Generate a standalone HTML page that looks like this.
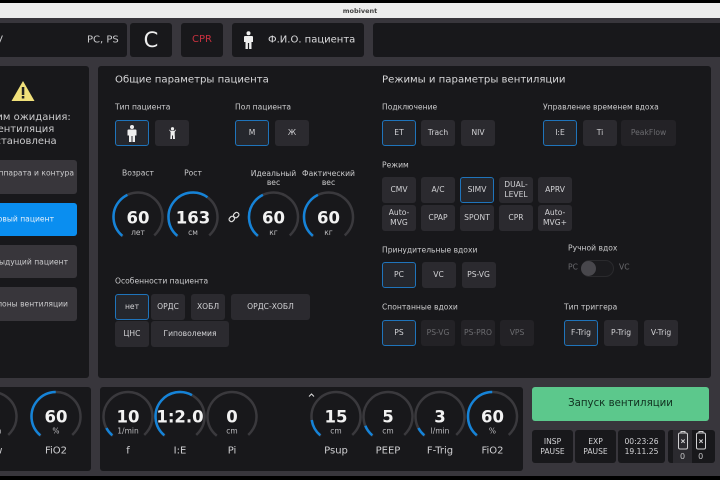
<!DOCTYPE html>
<html lang="ru"><head><meta charset="utf-8"><title>mobivent</title>
<style>
html{background:#000}
html,body{margin:0;padding:0;width:720px;height:480px;overflow:hidden}
body{position:relative;font-family:"DejaVu Sans","Liberation Sans",sans-serif;color:#d4d4d6;background:#000;filter:blur(.35px)}
#bg{position:absolute;left:0;top:3px;width:720px;height:473px;background:#38363c}
#tb{position:absolute;left:0;top:3px;width:720px;height:15px;background:#ededed;color:#444;font-size:6.5px;font-weight:bold;text-align:center;line-height:16px}
.p{position:absolute;background:#18181b;border-radius:3px}
.b{position:absolute;display:flex;align-items:center;justify-content:center;text-align:center;box-sizing:border-box;border-radius:3px;background:#2b2a2f;font-size:7.6px;line-height:10px;color:#d2d2d5;height:26px;width:34px}
.s{background:#25272d;border:1px solid #1f74bb}
.d{background:#232226;color:#6c6c70}
.t{position:absolute;white-space:nowrap;transform:translateY(-50%);font-size:7.6px;color:#cbcbcd}
.c{transform:translate(-50%,-50%);text-align:center;line-height:9px}
.h{font-size:10.15px;color:#d8d8da}
.g{position:absolute;left:0;top:0}
svg text{font-family:"DejaVu Sans","Liberation Sans",sans-serif;text-anchor:middle}
.v{font-size:16.5px;font-weight:bold;fill:#f2f2f2}
.u{font-size:7.5px;fill:#bdbdc0}
.l{font-size:10px;fill:#cfcfd2}
.tr{fill:none;stroke:#3a393d;stroke-width:2.5;stroke-dasharray:280 80}
.bl{fill:none;stroke:#1583d8;stroke-width:2.5}
</style></head><body>
<div id="bg"></div>
<div id="tb">mobivent</div>

<div class="p" style="left:-5px;top:23px;width:132px;height:34px"></div>
<div class="p" style="left:130px;top:23px;width:42px;height:34px"></div>
<div class="p" style="left:181px;top:23px;width:42px;height:34px"></div>
<div class="p" style="left:232px;top:23px;width:132px;height:34px"></div>
<div class="p" style="left:373px;top:23px;width:352px;height:34px"></div>
<div class="t" style="right:717px;top:40px;font-size:10px">SIMV</div>
<div class="t" style="left:87px;top:40px;font-size:10px">PC, PS</div>
<div class="t c" style="left:151px;top:40px;font-size:21px;line-height:24px;color:#eee">C</div>
<div class="t c" style="left:202px;top:40px;font-size:10px;line-height:12px;color:#c8313f">CPR</div>
<div class="t" style="left:268px;top:40px;font-size:10px;color:#dcdcde">Ф.И.О. пациента</div>
<svg style="position:absolute;left:243px;top:31px" width="11" height="18" viewBox="0 0 11 18"><circle cx="5.5" cy="2.3" r="2" fill="#eee"/><path d="M2 5h7q1 0 1 1v5H8.5v7h-2.400v-6h-1.200v6H2.500v-7H1V6q0-1 1-1z" fill="#eee"/></svg>

<div class="p" style="left:-5px;top:66px;width:94px;height:312px"></div>
<div class="p" style="left:98px;top:66px;width:613px;height:312px"></div>

<svg style="position:absolute;left:11px;top:80px" width="24" height="22" viewBox="0 0 24 22"><path d="M12 1L23.500 21H.5z" fill="#f0e07a"/><rect x="10.800" y="7" width="2.500" height="8" fill="#222"/><rect x="10.800" y="16" width="2.500" height="2.500" fill="#222"/></svg>
<div class="t c" style="left:23px;top:118px;font-size:10px;line-height:12px">Режим ожидания:</div>
<div class="t c" style="left:23px;top:130px;font-size:10px;line-height:12px">вентиляция</div>
<div class="t c" style="left:23px;top:142px;font-size:10px;line-height:12px">остановлена</div>

<div class="b" style="left:-30px;top:160px;width:107px;height:34px;background:#38363b"></div>
<div class="t" style="right:646px;top:172.500px">Тест аппарата и контура</div>
<div class="b" style="left:-30px;top:203px;width:107px;height:33px;background:#0a8ef0"></div>
<div class="t" style="right:666px;top:219px;color:#e4f0fa">Новый пациент</div>
<div class="b" style="left:-30px;top:245px;width:107px;height:33px;background:#38363b"></div>
<div class="t" style="right:652px;top:262px">Предыдущий пациент</div>
<div class="b" style="left:-30px;top:287px;width:107px;height:34px;background:#38363b"></div>
<div class="t" style="right:652px;top:304px">Шаблоны вентиляции</div>

<div class="t h" style="left:115px;top:80px">Общие параметры пациента</div>
<div class="t h" style="left:382px;top:80px">Режимы и параметры вентиляции</div>

<div class="t" style="left:115px;top:107px">Тип пациента</div>
<div class="t" style="left:235px;top:107px">Пол пациента</div>
<div class="t" style="left:382px;top:107px">Подключение</div>
<div class="t" style="left:543px;top:107px">Управление временем вдоха</div>

<div class="b s" style="left:115px;top:120px"><svg width="10" height="17" viewBox="0 0 10 17"><circle cx="5" cy="2" r="2" fill="#eee"/><path d="M1.500 4.500h7q1 0 1 1v5H8v6.500H5.500v-6h-1v6H2v-6.500H.5v-5q0-1 1-1z" fill="#eee"/></svg></div>
<div class="b" style="left:155px;top:120px"><svg width="7" height="12" viewBox="0 0 7 12"><circle cx="3.500" cy="1.700" r="1.600" fill="#eee"/><path d="M.3 2.500l1.200 1.300h4l1.200-1.300.3.500-1.300 2v2.300l.3 4.700H4v-3.500H3V12H1.300l.3-4.700V5L.1 3z" fill="#eee"/></svg></div>
<div class="b s" style="left:235px;top:120px">М</div>
<div class="b" style="left:275px;top:120px">Ж</div>
<div class="b s" style="left:382px;top:120px">ET</div>
<div class="b" style="left:421px;top:120px">Trach</div>
<div class="b" style="left:461px;top:120px">NIV</div>
<div class="b s" style="left:543px;top:120px">I:E</div>
<div class="b" style="left:583px;top:120px">Ti</div>
<div class="b d" style="left:621px;top:120px;width:55px">PeakFlow</div>

<div class="t c" style="left:138px;top:173px">Возраст</div>
<div class="t c" style="left:193px;top:173px">Рост</div>
<div class="t c" style="left:273.500px;top:177.500px">Идеальный<br>вес</div>
<div class="t c" style="left:328.500px;top:177.500px">Фактический<br>вес</div>
<svg style="position:absolute;left:228px;top:211px" width="12" height="12" viewBox="0 0 12 12" fill="none" stroke="#ddd" stroke-width="1.200"><rect x="6" y="1.300" width="4.500" height="5.500" rx="2" transform="rotate(45 8.250 4)"/><rect x="1.500" y="5.200" width="4.500" height="5.500" rx="2" transform="rotate(45 3.750 8)"/></svg>

<div class="t" style="left:115px;top:281px">Особенности пациента</div>
<div class="b s" style="left:115px;top:294px">нет</div>
<div class="b" style="left:151px;top:294px">ОРДС</div>
<div class="b" style="left:191px;top:294px">ХОБЛ</div>
<div class="b" style="left:231px;top:294px;width:79px">ОРДС-ХОБЛ</div>
<div class="b" style="left:115px;top:321px">ЦНС</div>
<div class="b" style="left:151px;top:321px;width:78px">Гиповолемия</div>

<div class="t" style="left:382px;top:165px">Режим</div>
<div class="b" style="left:382px;top:177px">CMV</div>
<div class="b" style="left:421px;top:177px">A/C</div>
<div class="b s" style="left:460px;top:177px">SIMV</div>
<div class="b" style="left:499px;top:177px">DUAL-<br>LEVEL</div>
<div class="b" style="left:538px;top:177px">APRV</div>
<div class="b" style="left:382px;top:205px">Auto-<br>MVG</div>
<div class="b" style="left:421px;top:205px">CPAP</div>
<div class="b" style="left:460px;top:205px">SPONT</div>
<div class="b" style="left:499px;top:205px">CPR</div>
<div class="b" style="left:538px;top:205px">Auto-<br>MVG+</div>

<div class="t" style="left:382px;top:250px">Принудительные вдохи</div>
<div class="b s" style="left:382px;top:262px">PC</div>
<div class="b" style="left:421.500px;top:262px">VC</div>
<div class="b" style="left:461.500px;top:262px">PS-VG</div>

<div class="t" style="left:568px;top:248px">Ручной вдох</div>
<div class="t" style="left:568px;top:267px;color:#6a6a6e">PC</div>
<div class="t" style="left:619px;top:267px;color:#6a6a6e">VC</div>
<div style="position:absolute;left:581px;top:260px;width:33px;height:17px;box-sizing:border-box;border-radius:9px;border:1px solid #2a2a2d;background:#1b1b1e"></div>
<div style="position:absolute;left:581px;top:261px;width:15px;height:15px;border-radius:50%;background:#48474c"></div>

<div class="t" style="left:382px;top:307px">Спонтанные вдохи</div>
<div class="b s" style="left:382px;top:320px">PS</div>
<div class="b d" style="left:421px;top:320px">PS-VG</div>
<div class="b d" style="left:461px;top:320px">PS-PRO</div>
<div class="b d" style="left:500px;top:320px">VPS</div>

<div class="t" style="left:564px;top:307px">Тип триггера</div>
<div class="b s" style="left:564px;top:320px">F-Trig</div>
<div class="b" style="left:604px;top:320px">P-Trig</div>
<div class="b" style="left:644px;top:320px">V-Trig</div>

<div class="p" style="left:-5px;top:387px;width:96px;height:84px"></div>
<div class="p" style="left:100px;top:387px;width:423px;height:84px"></div>

<svg class="g" width="720" height="480">
<circle class="tr" cx="138" cy="217" r="24.500" pathLength="360" transform="rotate(130 138 217)"/><circle class="bl" cx="138" cy="217" r="24.500" pathLength="360" stroke-dasharray="115 360" transform="rotate(130 138 217)"/>
<text class="v" x="138" y="223.500">60</text><text class="u" x="138" y="235">лет</text>
<circle class="tr" cx="193" cy="217" r="24.500" pathLength="360" transform="rotate(130 193 217)"/><circle class="bl" cx="193" cy="217" r="24.500" pathLength="360" stroke-dasharray="177 360" transform="rotate(130 193 217)"/>
<text class="v" x="193" y="223.500">163</text><text class="u" x="193" y="235">см</text>
<circle class="tr" cx="273.500" cy="217" r="24.500" pathLength="360" transform="rotate(130 273.500 217)"/><circle class="bl" cx="273.500" cy="217" r="24.500" pathLength="360" stroke-dasharray="115 360" transform="rotate(130 273.500 217)"/>
<text class="v" x="273.500" y="223.500">60</text><text class="u" x="273.500" y="235">кг</text>
<circle class="tr" cx="328.500" cy="217" r="24.500" pathLength="360" transform="rotate(130 328.500 217)"/><circle class="bl" cx="328.500" cy="217" r="24.500" pathLength="360" stroke-dasharray="115 360" transform="rotate(130 328.500 217)"/>
<text class="v" x="328.500" y="223.500">60</text><text class="u" x="328.500" y="235">кг</text>

<circle class="tr" cx="-8" cy="416.500" r="24.500" pathLength="360" transform="rotate(130 -8 416.500)"/>
<text class="u" x="-8" y="433.500">l/min</text><text class="l" x="-9" y="453.500">Flow</text>
<circle class="tr" cx="56" cy="416.500" r="24.500" pathLength="360" transform="rotate(130 56 416.500)"/><circle class="bl" cx="56" cy="416.500" r="24.500" pathLength="360" stroke-dasharray="140 360" transform="rotate(130 56 416.500)"/>
<text class="v" x="56" y="422.500">60</text><text class="u" x="56" y="433.500">%</text><text class="l" x="56" y="453.500">FiO2</text>

<circle class="tr" cx="128" cy="416.500" r="24.500" pathLength="360" transform="rotate(130 128 416.500)"/><circle class="bl" cx="128" cy="416.500" r="24.500" pathLength="360" stroke-dasharray="22 360" transform="rotate(130 128 416.500)"/>
<text class="v" x="128" y="422.500">10</text><text class="u" x="128" y="433.500">1/min</text><text class="l" x="128" y="453.500">f</text>
<circle class="tr" cx="180" cy="416.500" r="24.500" pathLength="360" transform="rotate(130 180 416.500)"/><circle class="bl" cx="180" cy="416.500" r="24.500" pathLength="360" stroke-dasharray="170 360" transform="rotate(130 180 416.500)"/>
<text class="v" x="180" y="422.500">1:2.0</text><text class="l" x="180" y="453.500">I:E</text>
<circle class="tr" cx="232" cy="416.500" r="24.500" pathLength="360" transform="rotate(130 232 416.500)"/>
<text class="v" x="232" y="422.500">0</text><text class="u" x="232" y="433.500">cm</text><text class="l" x="232" y="453.500">Pi</text>

<circle class="tr" cx="336" cy="416.500" r="24.500" pathLength="360" transform="rotate(130 336 416.500)"/><circle class="bl" cx="336" cy="416.500" r="24.500" pathLength="360" stroke-dasharray="42 360" transform="rotate(130 336 416.500)"/>
<text class="v" x="336" y="422.500">15</text><text class="u" x="336" y="433.500">cm</text><text class="l" x="336" y="453.500">Psup</text>
<circle class="tr" cx="388" cy="416.500" r="24.500" pathLength="360" transform="rotate(130 388 416.500)"/><circle class="bl" cx="388" cy="416.500" r="24.500" pathLength="360" stroke-dasharray="28 360" transform="rotate(130 388 416.500)"/>
<text class="v" x="388" y="422.500">5</text><text class="u" x="388" y="433.500">cm</text><text class="l" x="388" y="453.500">PEEP</text>
<circle class="tr" cx="440" cy="416.500" r="24.500" pathLength="360" transform="rotate(130 440 416.500)"/><circle class="bl" cx="440" cy="416.500" r="24.500" pathLength="360" stroke-dasharray="22 360" transform="rotate(130 440 416.500)"/>
<text class="v" x="440" y="422.500">3</text><text class="u" x="440" y="433.500">l/min</text><text class="l" x="440" y="453.500">F-Trig</text>
<circle class="tr" cx="492.500" cy="416.500" r="24.500" pathLength="360" transform="rotate(130 492.500 416.500)"/><circle class="bl" cx="492.500" cy="416.500" r="24.500" pathLength="360" stroke-dasharray="140 360" transform="rotate(130 492.500 416.500)"/>
<text class="v" x="492.500" y="422.500">60</text><text class="u" x="492.500" y="433.500">%</text><text class="l" x="492.500" y="453.500">FiO2</text>
<path d="M309 396.500l2.500-2.500 2.500 2.500" fill="none" stroke="#ddd" stroke-width="1"/>
</svg>

<div class="b" style="left:532px;top:387px;width:177px;height:34px;background:#5cc88c;color:#10301f;font-size:10.2px">Запуск вентиляции</div>
<div class="b" style="left:532px;top:430px;width:41px;height:33px;background:#18181b">INSP<br>PAUSE</div>
<div class="b" style="left:575px;top:430px;width:41px;height:33px;background:#18181b">EXP<br>PAUSE</div>
<div class="b" style="left:618px;top:430px;width:47px;height:33px;background:#18181b">00:23:26<br>19.11.25</div>
<div class="p" style="left:668px;top:430px;width:47px;height:33px"></div>
<div style="position:absolute;left:673px;top:430px;width:19px;height:33px;background:#2b2a2f"></div>
<svg class="g" width="720" height="480" fill="none" stroke="#d0d0d2" stroke-width="1">
<rect x="678.500" y="433" width="9" height="16" rx="1.500"/><path d="M681 433v-1.500h4v1.500"/><path d="M681.300 439.500l3.400 3.400M684.700 439.500l-3.400 3.400"/>
<rect x="696.500" y="433" width="9" height="16" rx="1.500"/><path d="M699 433v-1.500h4v1.500"/><path d="M699.300 439.500l3.400 3.400M702.700 439.500l-3.400 3.400"/>
<text x="682.500" y="459" fill="#c4c4c6" stroke="none" font-size="8">0</text>
<text x="700.700" y="459" fill="#c4c4c6" stroke="none" font-size="8">0</text>
</svg>
</body></html>
